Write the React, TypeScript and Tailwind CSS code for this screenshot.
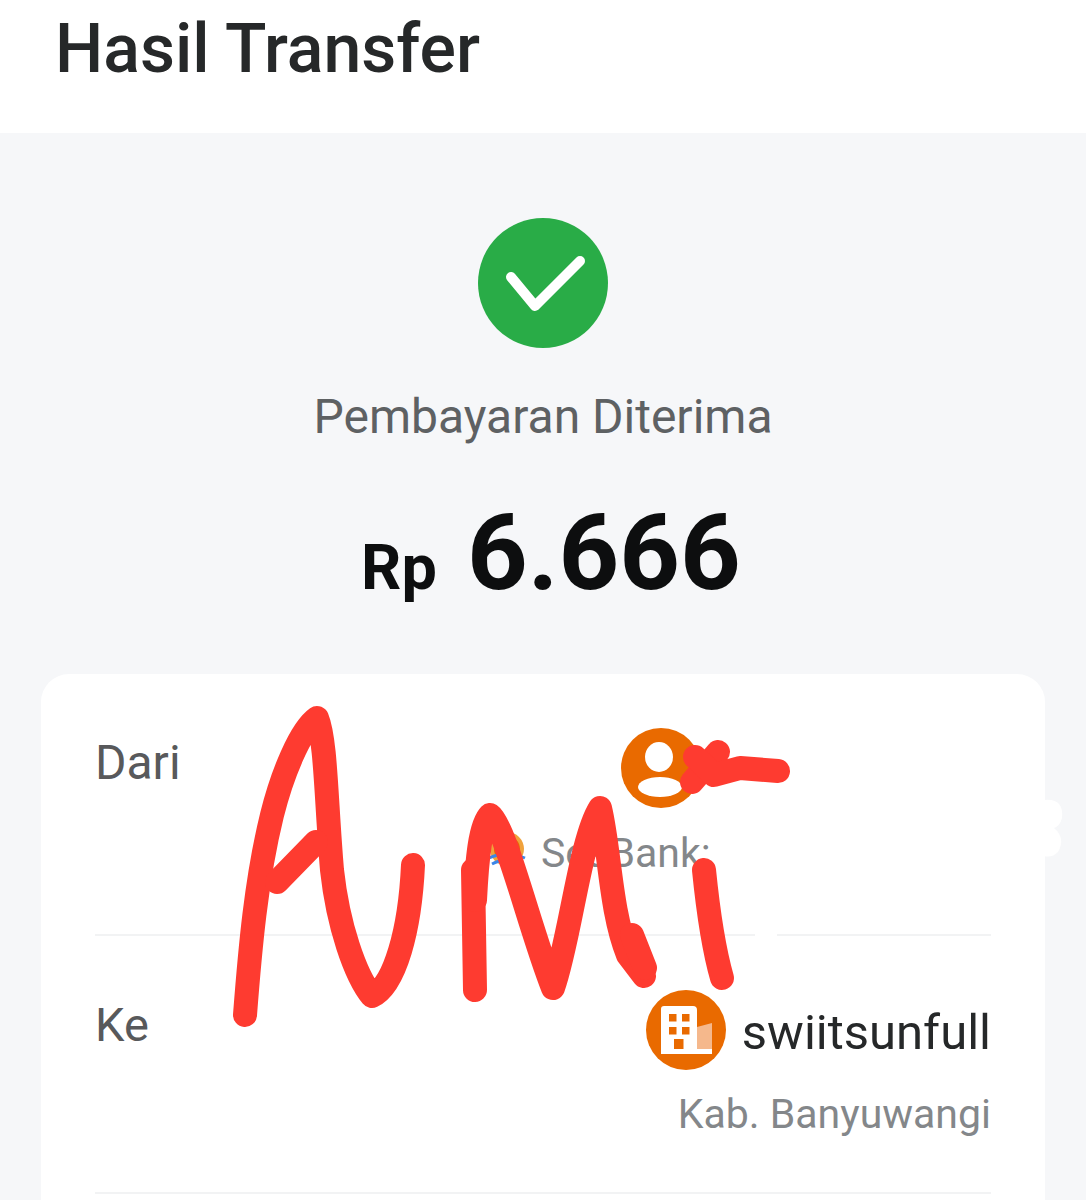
import React from 'react';

const PersonAvatar = () => (
  <svg width="80" height="80" viewBox="0 0 80 80" className="shrink-0">
    <circle cx="40" cy="40" r="40" fill="#e96a00" />
    <ellipse cx="38" cy="29" rx="14" ry="15" fill="#fff" />
    <ellipse cx="39" cy="59" rx="22" ry="10" fill="#fff" />
  </svg>
);

const BuildingAvatar = () => (
  <svg width="80" height="80" viewBox="0 0 80 80" className="shrink-0">
    <circle cx="40" cy="40" r="40" fill="#e96a00" />
    <path d="M51 37 L66 33 V60 H51 Z" fill="#f5b88c" />
    <path d="M15 19 Q15 16 18 16 H47 Q51 16 51 20 V59 H66 V64 H15 Z" fill="#fff" />
    <rect x="23" y="24" width="7.5" height="7.5" fill="#e96a00" />
    <rect x="36" y="24" width="7.5" height="7.5" fill="#e96a00" />
    <rect x="23" y="37" width="7.5" height="7.5" fill="#e96a00" />
    <rect x="36" y="37" width="7.5" height="7.5" fill="#e96a00" />
    <rect x="28" y="49" width="9.5" height="10" fill="#e96a00" />
  </svg>
);

const SeaLogo = () => (
  <svg width="42" height="44" viewBox="0 0 42 44" className="shrink-0">
    <circle cx="21" cy="18" r="17" fill="#f0a23c" />
    <circle cx="21" cy="18" r="13" fill="#e96a00" />
    <path d="M3 27 Q21 19 39 27" fill="none" stroke="#3b86e8" strokeWidth="3" />
    <path d="M6 33 Q21 25 36 33" fill="none" stroke="#3b86e8" strokeWidth="3" />
  </svg>
);

export default function App() {
  return (
    <div className="relative flex h-[1200px] flex-col overflow-hidden bg-[#f6f7f9] font-['Roboto',sans-serif]">
      <header className="h-[133px] shrink-0 bg-white pl-[55px] pt-[9px]">
        <h1 className="text-[68px] leading-[80px] font-medium text-[#262829]">Hasil Transfer</h1>
      </header>

      <section className="flex shrink-0 flex-col items-center pt-[85px]">
        <div className="flex h-[130px] w-[130px] items-center justify-center rounded-full bg-[#29ac47]">
          <svg width="130" height="130" viewBox="0 0 130 130">
            <path d="M33 59 L57 88 L102 43" fill="none" stroke="#fff" strokeWidth="10" strokeLinecap="round" strokeLinejoin="round" />
          </svg>
        </div>
        <p className="mt-[41px] text-[48px] leading-[56px] text-[#5e6163]">Pembayaran Diterima</p>
        <div className="mt-[53px] flex h-[110px] items-baseline gap-[30px] pl-[16px] leading-[110px] font-bold text-[#0d0e0f]">
          <span className="text-[63px]">Rp</span>
          <span className="text-[106px]">6.666</span>
        </div>
      </section>

      <section className="mx-[41px] mt-[66px] grow rounded-t-[28px] bg-white px-[54px]">
        <div className="flex h-[262px] justify-between border-b-2 border-[#f2f3f4] pt-[60px]">
          <span className="text-[48px] leading-[58px] text-[#58595b]">Dari</span>
          <div className="flex flex-col items-end -mt-[6px]">
            <div className="flex">
              <PersonAvatar />
              <span className="w-[290px]" />
            </div>
            <div className="mt-[21px] flex w-[505px] items-center gap-[13px]">
              <SeaLogo />
              <span className="text-[41px] leading-[48px] text-[#84878a]">SeaBank:</span>
            </div>
          </div>
        </div>
        <div className="flex h-[258px] justify-between border-b-2 border-[#f2f3f4] pt-[60px]">
          <span className="text-[47px] leading-[58px] text-[#58595b]">Ke</span>
          <div className="flex flex-col items-end -mt-[6px]">
            <div className="flex items-center gap-[16px]">
              <BuildingAvatar />
              <span className="mt-[6px] text-[49px] leading-[60px] text-[#262829]">swiitsunfull</span>
            </div>
            <span className="mt-[20px] text-[41px] leading-[48px] text-[#84878a]">Kab. Banyuwangi</span>
          </div>
        </div>
      </section>

      {/* hand drawn marks on top of the screenshot */}
      <svg className="absolute inset-0 pointer-events-none" width="1086" height="1200" viewBox="0 0 1086 1200" fill="none">
        <rect x="755" y="930" width="22" height="10" fill="#fff" />
        <path d="M1044 800 Q1064 798 1062 818 Q1060 826 1054 828 Q1066 838 1058 852 Q1052 858 1044 856 Z" fill="#fff" />
        <g stroke="#fe3b30" strokeWidth="24" strokeLinecap="round" strokeLinejoin="round">
          <path d="M245 1015 C250 950 256 880 272 815 C282 775 300 730 317 718 C326 740 326 800 332 870 C338 925 355 975 372 996 C395 985 410 930 413 865" />
          <path d="M277 882 L316 842" />
          <path d="M475 990 L473 870" />
          <path d="M475 900 C477 860 480 825 490 815 C505 825 530 930 553 988 C570 940 580 840 600 808 C610 850 610 910 628 955 L644 976" />
          <path d="M632 935 L645 968" />
          <path d="M704 870 C708 910 714 950 722 978" />
          <path d="M692 782 L718 752" />
          <path d="M695 757 L714 775 L740 768 L778 771" />
        </g>
      </svg>
    </div>
  );
}
